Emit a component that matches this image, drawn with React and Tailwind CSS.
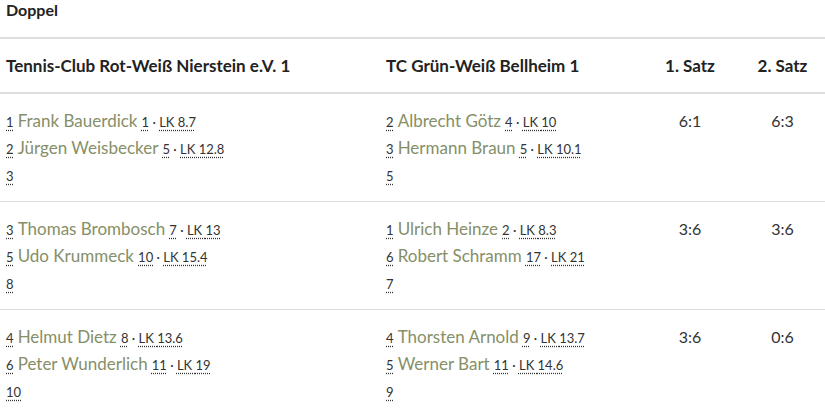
import { useState } from 'react';

const matches = [
  {
    home: [
      { pos: 1, name: 'Frank Bauerdick', rank: 1, lk: '8.7' },
      { pos: 2, name: 'Jürgen Weisbecker', rank: 5, lk: '12.8' },
    ],
    homeSum: 3,
    guest: [
      { pos: 2, name: 'Albrecht Götz', rank: 4, lk: '10' },
      { pos: 3, name: 'Hermann Braun', rank: 5, lk: '10.1' },
    ],
    guestSum: 5,
    sets: ['6:1', '6:3'],
  },
  {
    home: [
      { pos: 3, name: 'Thomas Brombosch', rank: 7, lk: '13' },
      { pos: 5, name: 'Udo Krummeck', rank: 10, lk: '15.4' },
    ],
    homeSum: 8,
    guest: [
      { pos: 1, name: 'Ulrich Heinze', rank: 2, lk: '8.3' },
      { pos: 6, name: 'Robert Schramm', rank: 17, lk: '21' },
    ],
    guestSum: 7,
    sets: ['3:6', '3:6'],
  },
  {
    home: [
      { pos: 4, name: 'Helmut Dietz', rank: 8, lk: '13.6' },
      { pos: 6, name: 'Peter Wunderlich', rank: 11, lk: '19' },
    ],
    homeSum: 10,
    guest: [
      { pos: 4, name: 'Thorsten Arnold', rank: 9, lk: '13.7' },
      { pos: 5, name: 'Werner Bart', rank: 11, lk: '14.6' },
    ],
    guestSum: 9,
    sets: ['3:6', '0:6'],
  },
];

const abbr = 'text-[13px] text-[#333] underline decoration-dotted decoration-[#333] underline-offset-[3px]';

function Player({ p }) {
  return (
    <div className="h-[27px] leading-[27px] whitespace-nowrap">
      <span className={abbr}>{p.pos}</span>{' '}
      <span className="text-[17px] text-[#868f68]">{p.name}</span>{' '}
      <span className={abbr}>{p.rank}</span>
      <span className="text-[13px] text-[#333]"> · </span>
      <span className={abbr}>LK {p.lk}</span>
    </div>
  );
}

function Team({ players, sum }) {
  return (
    <div className="flex flex-col">
      {players.map((p) => (
        <Player key={p.name} p={p} />
      ))}
      <div className="h-[27px] leading-[27px]">
        <span className={abbr}>{sum}</span>
      </div>
    </div>
  );
}

export default function App() {
  const [rows] = useState(matches);

  return (
    <div className="w-[825px] h-[415px] overflow-hidden bg-white text-[#222]" style={{ fontFamily: 'Lato, "Open Sans", sans-serif' }}>
      <div className="h-[37px] pl-[6px] text-[16px] font-bold leading-[20px]">Doppel</div>

      {/* header */}
      <div className="grid grid-cols-[380px_260px_100px_85px] items-center h-[57px] border-y-2 border-[#dedede] text-[17px] font-bold">
        <div className="pl-[6px]">Tennis-Club Rot-Weiß Nierstein e.V. 1</div>
        <div className="pl-[6px]">TC Grün-Weiß Bellheim 1</div>
        <div className="text-center">1. Satz</div>
        <div className="text-center">2. Satz</div>
      </div>

      {rows.map((m, i) => (
        <div key={i} className="grid grid-cols-[380px_260px_100px_85px] pt-[13px] pb-[13px] border-b border-[#dedede]">
          <div className="pl-[6px]">
            <Team players={m.home} sum={m.homeSum} />
          </div>
          <div className="pl-[6px]">
            <Team players={m.guest} sum={m.guestSum} />
          </div>
          {m.sets.map((s, j) => (
            <div key={j} className="text-center text-[16px] leading-[27px] text-[#333]">{s}</div>
          ))}
        </div>
      ))}
    </div>
  );
}
